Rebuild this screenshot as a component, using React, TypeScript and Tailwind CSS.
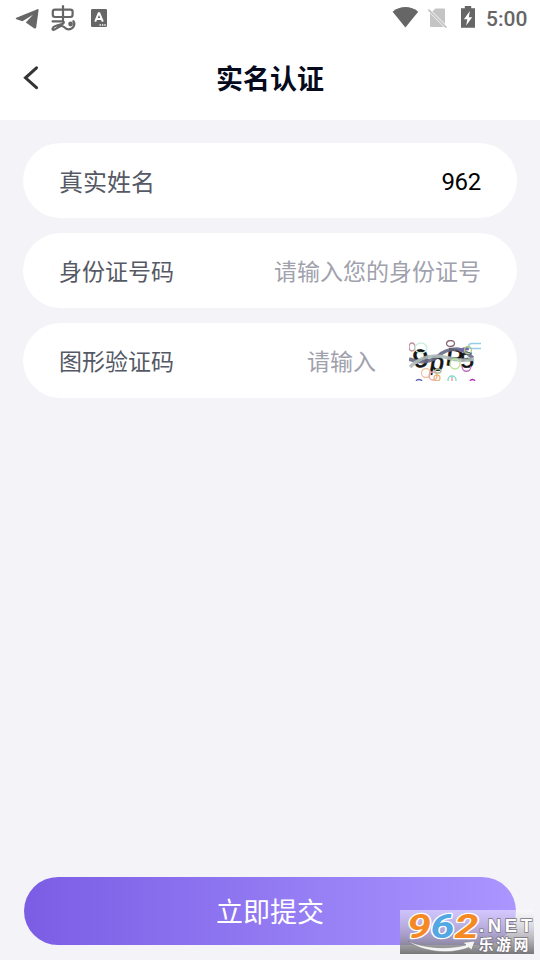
import type { ReactNode } from 'react';

const StatusBar = () => (
  <div className="flex h-9 items-center text-[#666666]">
    <svg className="ml-[15px] h-9 w-[93px]" viewBox="15 0 93 36" fill="none">
      <path
        d="M37.4 9.2 16.4 17.8c-.8.4-.8 1.2 0 1.5l6 2 10.6-6.6-7.2 7.7 8.6 6c.8.5 1.6.1 1.8-.8L38.6 10c.1-.8-.5-1.1-1.2-.8Z"
        fill="#666666"
      />
      <g
        stroke="#666666"
        strokeWidth="2.2"
        strokeLinecap="round"
        strokeLinejoin="round"
      >
        <path d="M63 6.2v14.6" />
        <rect x="52.8" y="9.6" width="19.8" height="7.4" rx="2.2" />
        <path d="M52.6 21.4h9.6c2.6 0 1.8 2.2-.2 2.7l-6 1.7c-4 1-4.2 4.2-2.4 4 3.6-.4 5.2-4.2 8.4-3.8 3.2.5 3 3.4 6.4 3.4 4.8 0 7.4-5 5-8.2" />
      </g>
      <circle cx="70.6" cy="24" r="2.4" fill="#666666" />
      <rect x="91" y="9" width="16" height="18" rx="1.2" fill="#666666" />
      <path d="m95.2 21.6 3.5-8.4h.6l3.5 8.4M96.4 19h5" stroke="#fff" strokeWidth="2" />
      <path d="M99.5 25h1.4m1 0h1.4m1 0h1.4" stroke="#fff" strokeWidth="1.3" />
    </svg>
    <svg className="ml-auto h-9 w-[86px]" viewBox="392 0 86 36">
      <path
        d="M392.6 11.7c7.4-6.2 18.2-6.2 25.6 0L405.4 27.5Z"
        fill="#666666"
      />
      <path d="M435.5 8.5h8.5a1 1 0 0 1 1 1V24L432.4 11.4ZM430 13.2 443.8 27H431a1 1 0 0 1-1-1Z" fill="#c4c4c4" />
      <path d="m428.4 9.6 18 18" stroke="#c4c4c4" strokeWidth="1.8" />
      <path
        d="M461 8.2h3.8V6h6.4v2.2h3.8v19.6h-14ZM469.9 11l-6 8.2h3.4L466.2 25.5l6-8.2h-3.4Z"
        fill="#666666"
        fillRule="evenodd"
      />
    </svg>
    <span className="mr-[13px] ml-[8px] w-[41px] pt-0.5 font-[Roboto,sans-serif] text-[21px] leading-none font-medium whitespace-nowrap">
      5:00
    </span>
  </div>
);

const FormRow = ({
  label,
  labelClass = 'pt-[3px] text-[23px]',
  children,
}: {
  label: string;
  labelClass?: string;
  children: ReactNode;
}) => (
  <div className="flex h-[75px] items-center justify-between rounded-full bg-white pr-9 pl-9">
    <span className={`${labelClass} leading-none text-[#555965]`}>{label}</span>
    {children}
  </div>
);

const Captcha = () => (
  <svg className="h-[41px] w-[72px]" viewBox="0 0 72 41" fill="none">
    <g
      fill="#141414"
      stroke="#141414"
      strokeWidth="0.7"
      fontFamily="Liberation Sans, sans-serif"
      fontSize="25"
    >
      <text transform="translate(5 28) rotate(-8) scale(1.15 1)">9</text>
      <text transform="translate(20 29) rotate(10)">p</text>
      <text transform="translate(36 25) rotate(8)" fontSize="25">P</text>
      <text transform="translate(52 28) rotate(-6) scale(1.15 1)" fontSize="21">5</text>
    </g>
    <path
      d="M0 19c10 4 19 4 28-2 6-6 12-8 20-8 7 0 11 5 16 9"
      stroke="#686983"
      strokeWidth="3.6"
      opacity=".9"
    />
    <path
      d="M1 27c8-8 16-11 26-11 12 0 20 7 38 3"
      stroke="#aebbb9"
      strokeWidth="3.6"
      opacity=".9"
    />
    <path d="M50 11c5-3 7-3 10-2" stroke="#7267a6" strokeWidth="3" />
    <g strokeWidth="1.3">
      <ellipse cx="3" cy="7" rx="3" ry="4" stroke="#c08d98" />
      <ellipse cx="12" cy="8" rx="6" ry="5" stroke="#caeee0" />
      <ellipse cx="41.5" cy="3.5" rx="4" ry="3" stroke="#8c6574" />
      <path d="M72 3.5H63c-4 0-5 5-1 5h10" stroke="#93cdec" />
      <circle cx="59" cy="10" r="3.5" stroke="#b0c88c" />
      <circle cx="46" cy="24" r="5" stroke="#bce59c" />
      <path d="M53 26c0 7 9 7 9 0" stroke="#bc71be" />
      <circle cx="17" cy="33" r="4.5" stroke="#edc4a4" />
      <circle cx="24" cy="36" r="4" stroke="#eea0a0" />
      <circle cx="28" cy="38" r="3" stroke="#e9ba79" />
      <ellipse cx="29" cy="31" rx="3" ry="2" stroke="#a9ba94" />
      <circle cx="43" cy="40" r="4" stroke="#7addd0" />
      <path d="M43 37v4" stroke="#eb9696" />
      <path d="M7 41c1-2 5-2 6 0" stroke="#5f62ac" />
      <path d="M61 41c1-2 4-2 5 0" stroke="#b42db3" />
    </g>
  </svg>
);

const Watermark = () => (
  <svg
    className="absolute top-[910px] left-[400px] h-11 w-[134px]"
    viewBox="0 0 134 44"
  >
    <defs>
      <linearGradient id="shade" x1="0" y1="0" x2="0" y2="1">
        <stop offset="0" stopColor="#ffffff" stopOpacity=".48" />
        <stop offset=".5" stopColor="#b5b2b9" stopOpacity=".62" />
        <stop offset="1" stopColor="#666666" stopOpacity=".88" />
      </linearGradient>
    </defs>
    <rect width="134" height="44" fill="url(#shade)" />
    <g
      fontFamily="Roboto, sans-serif"
      fontWeight="700"
      fontStyle="italic"
      fontSize="33"
      stroke="#ffffff"
      strokeWidth="2.4"
      strokeLinejoin="round"
      paintOrder="stroke"
    >
      <text x="7" y="27.5" fill="#f58a24" textLength="24" lengthAdjust="spacingAndGlyphs">9</text>
      <text x="30.5" y="27.5" fill="#52a7e4" textLength="24" lengthAdjust="spacingAndGlyphs">6</text>
      <text x="54.5" y="27.5" fill="#f58a24" textLength="24" lengthAdjust="spacingAndGlyphs">2</text>
    </g>
    <path
      d="M8 31c15 7 39 9 58 4l-3-2.5 12-1.5-3.5 9-2.5-2.5C50 45 22 42 8 31Z"
      fill="#f4f4f4"
      stroke="#777777"
      strokeWidth=".5"
    />
    <g fill="#ffffff" stroke="#77727e" strokeWidth="1.4" paintOrder="stroke">
      <text
        x="79"
        y="21.5"
        fontFamily="Liberation Sans, sans-serif"
        fontWeight="700"
        fontSize="18.5"
        textLength="53"
      >
        .NET
      </text>
      <text
        x="78.5"
        y="39.5"
        fontFamily="Noto Sans CJK SC, sans-serif"
        fontWeight="700"
        fontSize="15"
        textLength="50"
      >
        乐游网
      </text>
    </g>
  </svg>
);

export default function App() {
  return (
    <div className="relative flex h-[960px] w-[540px] flex-col overflow-hidden bg-[#f3f3f8] font-[Roboto,'Noto_Sans_CJK_SC',sans-serif]">
      <header className="h-[120px] bg-white">
        <StatusBar />
        <div className="grid h-[84px] grid-cols-[1fr_auto_1fr] items-center">
          <svg className="ml-[22px] h-6 w-[18px]" viewBox="0 0 18 24" fill="none">
            <path d="M14.5 1.8 3.5 11.8l11 9.9" stroke="#333333" strokeWidth="3" strokeLinecap="round" />
          </svg>
          <h1 className="pt-1 text-[27px] leading-none font-bold text-[#050a1c]">
            实名认证
          </h1>
        </div>
      </header>

      <main className="flex flex-1 flex-col gap-[15px] px-[23px] pt-[23px]">
        <FormRow label="真实姓名" labelClass="pt-1 text-[24px]">
          <span className="pt-0.5 text-[24px] leading-none tracking-[-0.3px] text-black">
            962
          </span>
        </FormRow>
        <FormRow label="身份证号码">
          <span className="pt-[3px] text-[23px] leading-none text-[#9fa1ad]">
            请输入您的身份证号
          </span>
        </FormRow>
        <FormRow label="图形验证码">
          <div className="flex items-center gap-[33px]">
            <span className="pt-[3px] text-[23px] leading-none text-[#9fa1ad]">
              请输入
            </span>
            <Captcha />
          </div>
        </FormRow>
      </main>

      <footer className="px-6 pb-[15px]">
        <button className="h-[68px] w-full rounded-full bg-linear-to-r from-[#7b5de5] to-[#ab95ff] pt-[5px] text-[27px] leading-none text-white">
          立即提交
        </button>
      </footer>
      <Watermark />
    </div>
  );
}
